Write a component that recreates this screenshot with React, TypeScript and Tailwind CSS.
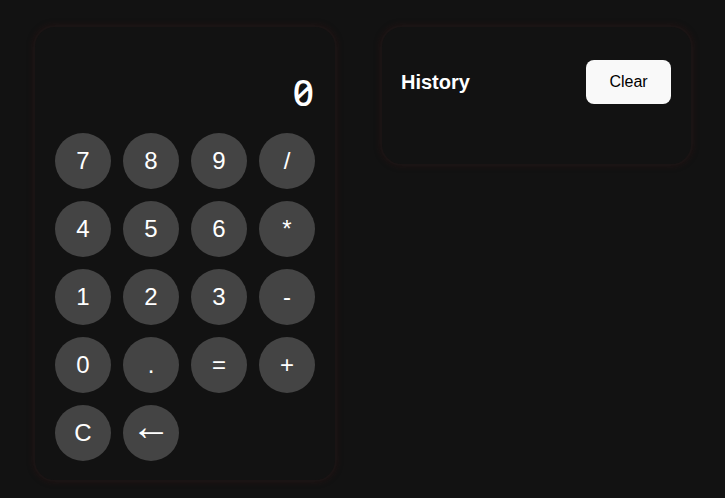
import React from "react";

const keys = ["7", "8", "9", "/", "4", "5", "6", "*", "1", "2", "3", "-", "0", ".", "=", "+", "C"];

export default function App() {
  return (
    <div className="min-h-[498px] w-[725px] bg-[#121212] flex items-start gap-[43px] pl-[33px] pt-[25px]" style={{ fontFamily: '"Liberation Sans", Arial, sans-serif' }}>
      <div className="w-[304px] h-[457px] rounded-[22px] bg-[#121212] border-2 border-[#1a1414] shadow-[0_0_6px_rgba(60,20,20,0.35)] px-[20px] pt-[44px]">
        <div className="h-[40px] flex items-center justify-end pr-[1px] text-white text-[37px] font-medium leading-none" style={{ fontFamily: '"Noto Sans", Inter, sans-serif', fontVariantNumeric: "slashed-zero" }}>
          0
        </div>
        <div className="mt-[22px] grid grid-cols-4 gap-[12px] w-[260px]">
          {keys.map((k) => (
            <button key={k} className="w-[56px] h-[56px] rounded-full bg-[#444444] text-white text-[24px] flex items-center justify-center">
              {k}
            </button>
          ))}
          <button className="w-[56px] h-[56px] rounded-full bg-[#444444] text-white text-[40px] flex items-center justify-center">
            <span className="leading-none -mt-[14px]">←</span>
          </button>
        </div>
      </div>
      <div className="w-[313px] h-[141px] rounded-[22px] bg-[#121212] border-2 border-[#1a1414] shadow-[0_0_6px_rgba(60,20,20,0.35)] pl-[19px] pr-[20px] pt-[33px] flex items-start justify-between">
        <div className="text-white font-bold text-[20px] leading-[44px]">History</div>
        <button className="w-[85px] h-[44px] rounded-[8px] bg-[#f9f9f9] text-black text-[16px]">Clear</button>
      </div>
    </div>
  );
}
